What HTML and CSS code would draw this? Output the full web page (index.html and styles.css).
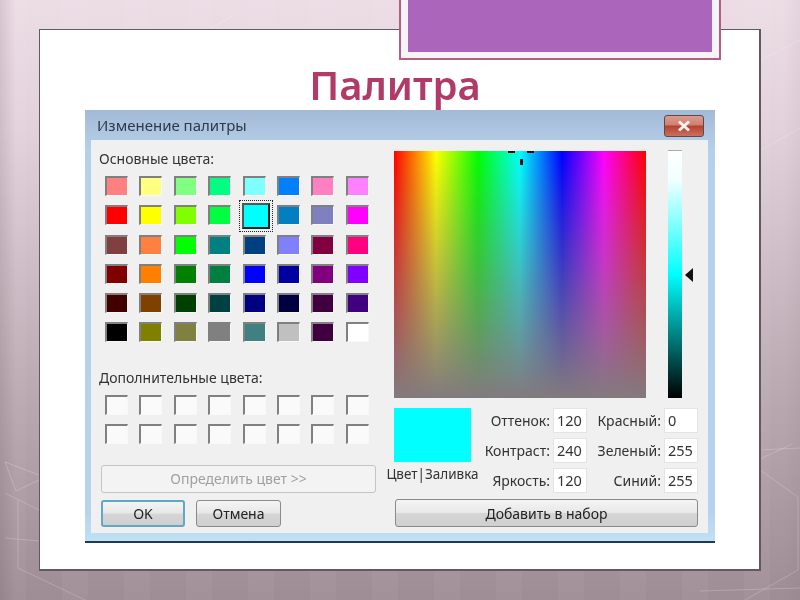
FILE: index.html
```html
<!DOCTYPE html>
<html lang="en">
<head>
    <meta charset="UTF-8">
    <meta name="viewport" content="width=device-width, initial-scale=1.0">
    <title>Палитра</title>
    <link rel="stylesheet" href="styles.css">
</head>
<body>
    <svg class="bg-lines" width="800" height="600" viewBox="0 0 800 600">
        <path d="M5 462 L39 475 M16 491 L39 480 M5 462 L16 491 M5 493 L39 510 M5 538 L39 541 M18 500 L18 568 L85 600" />
        <path d="M760 450 L800 448 M760 459 L792 444 M760 470 L798 497 L798 570 L745 600 M700 591 L800 588" />
        <path d="M761 150 L800 128 M210 29 L232 16 M761 60 L800 40" />
    </svg>

    <div class="slide">
        <div class="slide-tab"><div class="slide-tab-fill"></div></div>
        <h1 class="slide-title">Палитра</h1>

        <div class="dialog">
            <div class="dialog-titlebar">
                <span>Изменение палитры</span>
                <button class="close-button">
                    <svg width="16" height="12" viewBox="0 0 16 12"><path d="M3 1.5 L13 10.5 M13 1.5 L3 10.5" /></svg>
                </button>
            </div>

            <div class="dialog-body">
                <div class="left-col">
                    <div class="group-label">Основные цвета:</div>
                    <div class="swatches">
                        <div class="swatch s-ff8080"></div><div class="swatch s-ffff80"></div><div class="swatch s-80ff80"></div><div class="swatch s-00ff80"></div><div class="swatch s-80ffff"></div><div class="swatch s-0080ff"></div><div class="swatch s-ff80c0"></div><div class="swatch s-ff80ff"></div>
                        <div class="swatch s-ff0000"></div><div class="swatch s-ffff00"></div><div class="swatch s-80ff00"></div><div class="swatch s-00ff40"></div><div class="swatch s-00ffff selected"></div><div class="swatch s-0080c0"></div><div class="swatch s-8080c0"></div><div class="swatch s-ff00ff"></div>
                        <div class="swatch s-804040"></div><div class="swatch s-ff8040"></div><div class="swatch s-00ff00"></div><div class="swatch s-008080"></div><div class="swatch s-004080"></div><div class="swatch s-8080ff"></div><div class="swatch s-800040"></div><div class="swatch s-ff0080"></div>
                        <div class="swatch s-800000"></div><div class="swatch s-ff8000"></div><div class="swatch s-008000"></div><div class="swatch s-008040"></div><div class="swatch s-0000ff"></div><div class="swatch s-0000a0"></div><div class="swatch s-800080"></div><div class="swatch s-8000ff"></div>
                        <div class="swatch s-400000"></div><div class="swatch s-804000"></div><div class="swatch s-004000"></div><div class="swatch s-004040"></div><div class="swatch s-000080"></div><div class="swatch s-000040"></div><div class="swatch s-400040"></div><div class="swatch s-400080"></div>
                        <div class="swatch s-000000"></div><div class="swatch s-808000"></div><div class="swatch s-808040"></div><div class="swatch s-808080"></div><div class="swatch s-408080"></div><div class="swatch s-c0c0c0"></div><div class="swatch s-400040"></div><div class="swatch s-ffffff"></div>
                    </div>

                    <div class="group-label custom-label">Дополнительные цвета:</div>
                    <div class="swatches custom">
                        <div class="swatch"></div><div class="swatch"></div><div class="swatch"></div><div class="swatch"></div><div class="swatch"></div><div class="swatch"></div><div class="swatch"></div><div class="swatch"></div>
                        <div class="swatch"></div><div class="swatch"></div><div class="swatch"></div><div class="swatch"></div><div class="swatch"></div><div class="swatch"></div><div class="swatch"></div><div class="swatch"></div>
                    </div>

                    <button class="btn btn-wide" disabled>Определить цвет &gt;&gt;</button>
                    <div class="button-row">
                        <button class="btn btn-ok">OK</button>
                        <button class="btn btn-cancel">Отмена</button>
                    </div>
                </div>

                <div class="right-col">
                    <div class="picker-row">
                        <div class="spectrum">
                            <span class="cross cross-left"></span>
                            <span class="cross cross-right"></span>
                            <span class="cross cross-down"></span>
                        </div>
                        <div class="lum-bar"><span class="lum-arrow"></span></div>
                    </div>

                    <div class="color-row">
                        <div class="preview">
                            <div class="preview-box"></div>
                            <div class="preview-label">Цвет|Заливка</div>
                        </div>
                        <div class="fields">
                            <label>Оттенок:</label><div class="field">120</div>
                            <label>Красный:</label><div class="field">0</div>
                            <label>Контраст:</label><div class="field">240</div>
                            <label>Зеленый:</label><div class="field">255</div>
                            <label>Яркость:</label><div class="field">120</div>
                            <label>Синий:</label><div class="field">255</div>
                        </div>
                    </div>

                    <button class="btn btn-add">Добавить в набор</button>
                </div>
            </div>
        </div>
    </div>
</body>
</html>
```

FILE: styles.css
```css
html, body {
    height: 100%;
}
body {
    margin: 0;
    width: 800px;
    height: 600px;
    overflow: hidden;
    position: relative;
    font-family: "Noto Sans", sans-serif;
    background:
        linear-gradient(to right, rgba(80, 50, 65, 0.14), rgba(80, 50, 65, 0) 16px),
        linear-gradient(to left, rgba(80, 50, 65, 0.05), rgba(80, 50, 65, 0) 16px),
        repeating-linear-gradient(to right, rgba(255, 255, 255, 0.035) 0 26px, rgba(255, 255, 255, 0) 26px 62px),
        linear-gradient(to bottom, #ecdde5 0, #e2d1da 130px, #b9a8b0 400px, #9f8d95 600px);
}
.bg-lines {
    position: absolute;
    top: 0;
    left: 0;
}
.bg-lines path {
    fill: none;
    stroke: rgba(255, 255, 255, 0.2);
    stroke-width: 1;
}

/* white slide */
.slide {
    position: relative;
    box-sizing: border-box;
    width: 722px;
    height: 542px;
    margin: 0 0 0 39px;
    top: 29px;
    padding-top: 30px;
    background-color: #fff;
    border: 1px solid #5f5a5d;
    border-right-width: 2px;
    border-bottom-width: 2px;
}
.slide-tab {
    position: absolute;
    left: 359px;
    top: -30px;
    box-sizing: border-box;
    width: 322px;
    height: 60px;
    padding: 0 7px 6px;
    background-color: #f8f3f7;
    border: 2px solid #b25f82;
    border-top: none;
}
.slide-tab-fill {
    height: 100%;
    background-color: #ab65bb;
}
.slide-title {
    margin: 0;
    height: 50px;
    padding-right: 9px;
    text-align: center;
    font-family: "Noto Sans", sans-serif;
    font-size: 40px;
    font-weight: 600;
    line-height: 50px;
    color: #b03a68;
    filter: blur(0.4px);
}

/* dialog window */
.dialog {
    box-sizing: border-box;
    width: 630px;
    height: 433px;
    margin-left: 45px;
    display: flex;
    flex-direction: column;
    padding: 0 7px 8px 6px;
    background: linear-gradient(to bottom, #a2bad6 0, #b7d0ea 40px, #b7d2ec 400px, #bfe0f5 100%);
    border-bottom: 2px solid #1d3c4e;
    filter: blur(0.4px);
}
.dialog-titlebar {
    flex: none;
    height: 30px;
    display: flex;
    align-items: center;
    justify-content: space-between;
    padding: 0 4px 0 6px;
    font-size: 15px;
    color: #2f3a44;
}
.close-button {
    box-sizing: border-box;
    width: 40px;
    height: 22px;
    margin-top: 1px;
    padding: 0;
    display: flex;
    align-items: center;
    justify-content: center;
    border: 1px solid #5a4a4c;
    border-radius: 3px;
    background: linear-gradient(to bottom, #dc9b8e 0, #cf7f70 45%, #b6412d 50%, #c9705e 100%);
}
.close-button path {
    fill: none;
    stroke: #f4f0ee;
    stroke-width: 3;
}
.dialog-body {
    flex: 1;
    display: flex;
    padding: 11px 10px 6px 8px;
    background-color: #f0f0f0;
}
.left-col {
    width: 295px;
    flex: none;
    display: flex;
    flex-direction: column;
}
.group-label {
    font-size: 14px;
    line-height: 16px;
    color: #333;
    margin-bottom: 9px;
}
.custom-label {
    margin-top: 28px;
    margin-bottom: 8.5px;
}

/* colour swatches */
.swatches {
    margin-left: 6px;
    display: grid;
    grid-template-columns: repeat(8, 23px);
    grid-auto-rows: 20px;
    column-gap: 11.4px;
    row-gap: 9.3px;
}
.swatches.custom {
    row-gap: 9px;
}
.swatch {
    position: relative;
    box-sizing: border-box;
    background-color: #fafafa;
    border: 1px solid #f8f8f8;
    border-top: 2px solid #808080;
    border-left: 2px solid #808080;
}
.swatch.selected {
    margin: -2px -4px -4px -1px;
    border: 2px solid #555;
    border-right-color: #222;
    border-bottom-color: #222;
}
.swatch.selected::after {
    content: "";
    position: absolute;
    top: -5px;
    left: -5px;
    right: -5px;
    bottom: -5px;
    border: 1.5px dotted #222;
}
.s-ff8080 { background-color: #ff8080; }
.s-ffff80 { background-color: #ffff80; }
.s-80ff80 { background-color: #80ff80; }
.s-00ff80 { background-color: #00ff80; }
.s-80ffff { background-color: #80ffff; }
.s-0080ff { background-color: #0080ff; }
.s-ff80c0 { background-color: #ff80c0; }
.s-ff80ff { background-color: #ff80ff; }
.s-ff0000 { background-color: #ff0000; }
.s-ffff00 { background-color: #ffff00; }
.s-80ff00 { background-color: #80ff00; }
.s-00ff40 { background-color: #00ff40; }
.s-00ffff { background-color: #00ffff; }
.s-0080c0 { background-color: #0080c0; }
.s-8080c0 { background-color: #8080c0; }
.s-ff00ff { background-color: #ff00ff; }
.s-804040 { background-color: #804040; }
.s-ff8040 { background-color: #ff8040; }
.s-00ff00 { background-color: #00ff00; }
.s-008080 { background-color: #008080; }
.s-004080 { background-color: #004080; }
.s-8080ff { background-color: #8080ff; }
.s-800040 { background-color: #800040; }
.s-ff0080 { background-color: #ff0080; }
.s-800000 { background-color: #800000; }
.s-ff8000 { background-color: #ff8000; }
.s-008000 { background-color: #008000; }
.s-008040 { background-color: #008040; }
.s-0000ff { background-color: #0000ff; }
.s-0000a0 { background-color: #0000a0; }
.s-800080 { background-color: #800080; }
.s-8000ff { background-color: #8000ff; }
.s-400000 { background-color: #400000; }
.s-804000 { background-color: #804000; }
.s-004000 { background-color: #004000; }
.s-004040 { background-color: #004040; }
.s-000080 { background-color: #000080; }
.s-000040 { background-color: #000040; }
.s-400040 { background-color: #400040; }
.s-400080 { background-color: #400080; }
.s-000000 { background-color: #000000; }
.s-808000 { background-color: #808000; }
.s-808040 { background-color: #808040; }
.s-808080 { background-color: #808080; }
.s-408080 { background-color: #408080; }
.s-c0c0c0 { background-color: #c0c0c0; }
.s-ffffff { background-color: #ffffff; }

/* buttons */
.btn {
    box-sizing: border-box;
    padding: 0;
    font-family: "Noto Sans", sans-serif;
    font-size: 14px;
    color: #222;
    border: 1px solid #8a8a8a;
    border-radius: 3px;
    background: linear-gradient(to bottom, #f4f4f4 0, #e8e8e8 48%, #d6d6d6 52%, #cfcfcf 100%);
}
.btn-wide {
    width: 275px;
    height: 28px;
    margin-top: 21px;
    margin-left: 2px;
    color: #a0a0a0;
    border-color: #c4c4c4;
    background: #f3f3f3;
}
.button-row {
    display: flex;
    gap: 11px;
    margin-top: 7px;
    margin-left: 2px;
}
.btn-ok {
    width: 84px;
    height: 27px;
    border: 2px solid #5fa8c8;
}
.btn-cancel {
    width: 85px;
    height: 27px;
}

/* colour picker */
.right-col {
    width: 304px;
    flex: none;
    display: flex;
    flex-direction: column;
}
.picker-row {
    display: flex;
    gap: 22px;
}
.spectrum {
    position: relative;
    width: 252px;
    height: 247px;
    background:
        linear-gradient(to bottom, rgba(128, 128, 128, 0) 0, rgba(130, 122, 126, 1) 100%),
        linear-gradient(to right, #ff0000 0, #ffff00 16.67%, #00ff00 33.33%, #00ffff 50%, #0000ff 66.67%, #ff00ff 83.33%, #ff0000 100%);
}
.cross {
    position: absolute;
    background-color: #111;
}
.cross-left {
    left: 114px;
    top: 0;
    width: 7px;
    height: 2px;
}
.cross-right {
    left: 133px;
    top: 0;
    width: 7px;
    height: 2px;
}
.cross-down {
    left: 126px;
    top: 8px;
    width: 3px;
    height: 6px;
}
.lum-bar {
    position: relative;
    width: 14px;
    height: 248px;
    margin-top: -1px;
    background: linear-gradient(to bottom, #ffffff 0, #f0ffff 12%, #00ffff 50%, #000000 100%);
    border-top: 1px solid #aaa;
    box-sizing: border-box;
}
.lum-arrow {
    position: absolute;
    left: 17px;
    top: 117px;
    width: 0;
    height: 0;
    border-top: 7px solid transparent;
    border-bottom: 7px solid transparent;
    border-right: 8px solid #111;
}
.color-row {
    display: flex;
    margin-top: 10px;
}
.preview {
    width: 77px;
    flex: none;
    display: flex;
    flex-direction: column;
    align-items: center;
}
.preview-box {
    width: 77px;
    height: 54px;
    flex: none;
    background-color: #00ffff;
}
.preview-label {
    margin-top: 3px;
    font-size: 13.5px;
    line-height: 18px;
    white-space: nowrap;
    color: #333;
}
.fields {
    margin-left: 9px;
    display: grid;
    grid-template-columns: 73px 34px 77px 34px;
    grid-auto-rows: 25px;
    row-gap: 5px;
}
.fields label {
    font-size: 14px;
    line-height: 25px;
    text-align: right;
    white-space: nowrap;
    padding-right: 3px;
    color: #333;
}
.field {
    box-sizing: border-box;
    padding-left: 3px;
    font-size: 14.5px;
    line-height: 23px;
    color: #333;
    background-color: #fff;
    border: 1px solid #e4e4e4;
}
.btn-add {
    width: 303px;
    height: 28px;
    margin-top: 6px;
    margin-left: 1px;
}
```
